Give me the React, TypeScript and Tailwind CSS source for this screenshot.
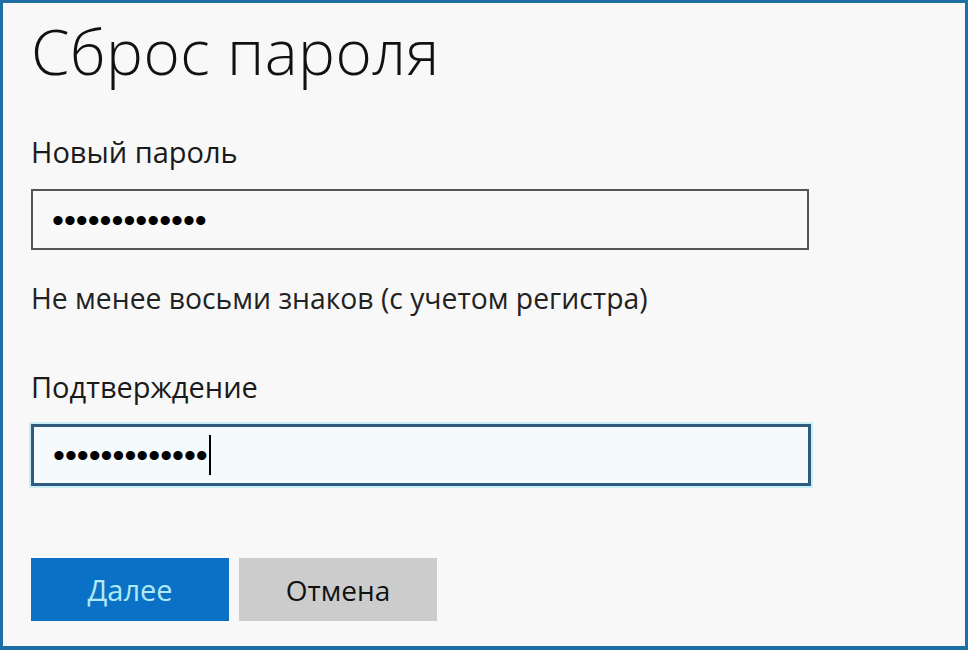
import React from 'react';

const FONT = { fontFamily: '"Open Sans", "Noto Sans", "Liberation Sans", sans-serif' };

function Dots({ caret = false }: { caret?: boolean }) {
  return (
    <div className="flex items-center">
      <span className="text-[34px] leading-none tracking-[0px] text-black" style={{ fontFamily: '"Liberation Sans", sans-serif' }}>
        •••••••••••••
      </span>
      {caret && <span className="ml-[1px] h-[40px] w-[2px] bg-black" />}
    </div>
  );
}

export default function App() {
  return (
    <div
      className="box-border flex h-[650px] w-[968px] flex-col border-[3px] border-b-4 border-[#1f6fa3] bg-[#f8f8f8] pl-[28px] text-[#111]"
      style={FONT}
    >
      <h1 className="mt-[8px] text-[62px] font-light leading-[80px] tracking-[0.5px] text-[#111]">Сброс пароля</h1>

      <label className="mt-[44px] text-[29px] font-medium leading-[34px] text-[#1a1a1a]">Новый пароль</label>
      <div className="mt-[20px] flex h-[61px] w-[778px] items-center border-2 border-[#555] bg-[#f9f9f9] pl-[19px]">
        <Dots />
      </div>

      <p className="mt-[30px] text-[28.3px] leading-[36px] text-[#222]">Не менее восьми знаков (с учетом регистра)</p>

      <label className="mt-[54px] text-[29px] font-medium leading-[34px] text-[#1a1a1a]">Подтверждение</label>
      <div className="mt-[20px] flex h-[62px] w-[780px] items-center border-[3px] border-[#2f5c7c] bg-[#f5fbfc] pl-[19px] shadow-[0_0_0_2px_#c9eef5]">
        <Dots caret />
      </div>

      <div className="mt-[72px] flex gap-[10px]">
        <button className="h-[63px] w-[198px] bg-[#0a71c6] text-[29px] text-[#aeeaf6]">Далее</button>
        <button className="h-[63px] w-[198px] bg-[#cccccc] text-[28px] text-[#111]">Отмена</button>
      </div>
    </div>
  );
}
